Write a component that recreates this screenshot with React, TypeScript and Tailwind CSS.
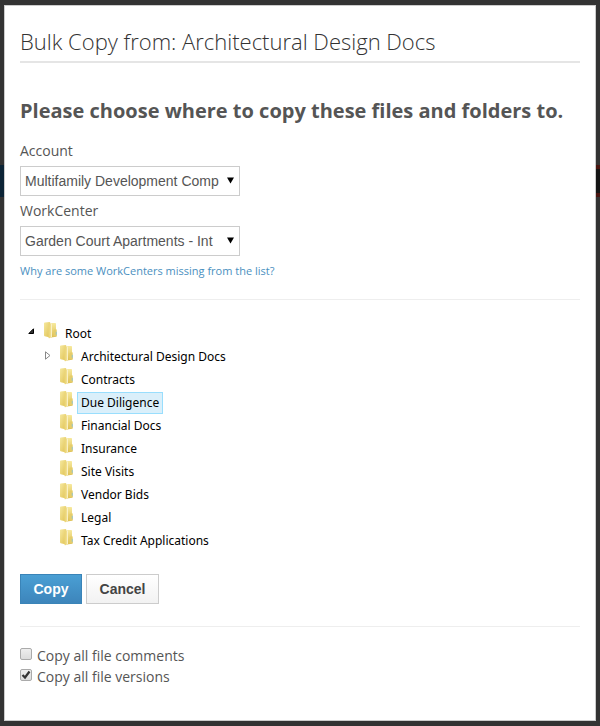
import { useState } from "react";
import type { ReactNode, SelectHTMLAttributes } from "react";

const FOLDERS = [
  "Architectural Design Docs",
  "Contracts",
  "Due Diligence",
  "Financial Docs",
  "Insurance",
  "Site Visits",
  "Vendor Bids",
  "Legal",
  "Tax Credit Applications",
];

function FolderIcon() {
  return (
    <svg viewBox="0 0 16 18" className="h-[18px] w-4 shrink-0" aria-hidden="true">
      <defs>
        <linearGradient id="folderFront" x1="0" y1="0" x2="1" y2="1">
          <stop offset="0" stopColor="#f6e9a0" />
          <stop offset="1" stopColor="#dfc150" />
        </linearGradient>
        <linearGradient id="folderBack" x1="0" y1="0" x2="0" y2="1">
          <stop offset="0" stopColor="#f7ea9f" />
          <stop offset="1" stopColor="#dcbd50" />
        </linearGradient>
      </defs>
      <path d="M8 2.800q0-.8.8-.8h3.400q.8 0 .8.8v5.200l.8.800v6.200q0 .6-.7.7L8 16.500z" fill="url(#folderBack)" />
      <path d="M1 2.300q0-.8.8-.9L6.500 1q.8 0 .8.900V16.500l-5.700-1.300q-.6-.2-.6-.9z" fill="url(#folderFront)" />
      <path d="M5.500 3.500L8 2.200q.8-.3.8.5v13.300l-2.500 1.200q-.8.200-.8-.6z" fill="#ecd67a" />
      <path d="M7.800 2.500l1-.3v13.800l-1 .6z" fill="#fdf8d8" />
      <path d="M10.500 9.500l1-1h1.500v6.500l-2.500.6z" fill="#e6cd69" />
      <path d="M12.800 10.500l.9.400v2.700l-.9.600z" fill="#8fc4d4" />
    </svg>
  );
}

interface TreeLabelProps {
  name: string;
  selected: boolean;
  onSelect: (name: string) => void;
}

function TreeLabel({ name, selected, onSelect }: TreeLabelProps) {
  return (
    <button
      type="button"
      onClick={() => onSelect(name)}
      className={
        selected
          ? "h-[22px] border border-[#99defd] bg-[#daeffa] px-[3px] leading-5"
          : "h-[22px] border border-transparent px-[3px] leading-5"
      }
    >
      {name}
    </button>
  );
}

interface SelectFieldProps extends SelectHTMLAttributes<HTMLSelectElement> {
  label: string;
  children: ReactNode;
}

function SelectField({ id, label, children, ...rest }: SelectFieldProps) {
  return (
    <div>
      <label htmlFor={id} className="block h-[30px] leading-[30px]">
        {label}
      </label>
      <div className="relative w-[220px]">
        <select
          id={id}
          className="block h-[30px] w-full appearance-none overflow-hidden border border-[#ccc] bg-white pr-5 pl-1 font-['Liberation_Sans',sans-serif] text-sm text-[#555]"
          {...rest}
        >
          {children}
        </select>
        <svg
          viewBox="0 0 7 7"
          className="pointer-events-none absolute top-[11px] right-[6px] h-[7px] w-[7px]"
          aria-hidden="true"
        >
          <path d="M0 .5h7L3.500 6.500z" fill="#000" />
        </svg>
      </div>
    </div>
  );
}

interface CheckFieldProps {
  id: string;
  label: string;
  defaultChecked?: boolean;
}

function CheckField({ id, label, defaultChecked }: CheckFieldProps) {
  return (
    <div className="flex h-[21px] items-start gap-[5px]">
      <span className="relative mt-[2px] h-3 w-3">
        <input
          id={id}
          type="checkbox"
          defaultChecked={defaultChecked}
          className="peer block h-3 w-3 appearance-none rounded-[2px] border border-[#aaa] bg-linear-to-b from-[#eee] to-[#dcdcdc]"
        />
        <svg
          viewBox="0 0 12 12"
          className="pointer-events-none absolute inset-0 hidden h-3 w-3 peer-checked:block"
          aria-hidden="true"
        >
          <path d="M2.500 6l2.500 2.500 4.500-6" fill="none" stroke="#333" strokeWidth="2.200" />
        </svg>
      </span>
      <label htmlFor={id} className="leading-5">
        {label}
      </label>
    </div>
  );
}

export default function App() {
  const [selected, setSelected] = useState("Due Diligence");

  return (
    <div className="relative min-h-screen bg-[#333] px-1 pt-[5px] pb-[5px] font-['Open_Sans',sans-serif] text-sm text-[#555]">
      {/* dimmed toolbar of the page behind the dialog */}
      <div className="absolute inset-x-0 top-[165px] flex h-8 justify-between" aria-hidden="true">
        <span className="w-1 bg-[#0c2436]" />
        <span className="w-1 border-y-4 border-[#4a1510] bg-[#151515]" />
      </div>

      <div
        role="dialog"
        aria-labelledby="dialog-title"
        className="relative min-h-[716px] border border-[#ccc] bg-white px-[15px] pb-8"
      >
        <h1
          id="dialog-title"
          className="border-b-2 border-[#e5e5e5] pt-5 pb-[5px] text-[22px] leading-[30px] font-light text-[#333]"
        >
          Bulk Copy from: Architectural Design Docs
        </h1>

        <h2 className="mt-[33px] mb-[10px] text-xl leading-[30px] font-bold">
          Please choose where to copy these files and folders to.
        </h2>

        <SelectField id="account" label="Account">
          <option>Multifamily Development Comp</option>
        </SelectField>
        <SelectField id="workcenter" label="WorkCenter">
          <option>Garden Court Apartments - Int</option>
        </SelectField>

        <a href="#missing" className="mt-[5px] inline-block text-[11px] leading-5 text-[#4a8fc0]">
          Why are some WorkCenters missing from the list?
        </a>

        <hr className="mt-[18px] border-[#eee]" />

        <ul className="mt-[21px] font-['Noto_Sans',sans-serif] text-xs text-black">
          <li>
            <div className="flex h-[23px] pl-2">
              <svg viewBox="0 0 7 7" className="mt-[7px] mr-2 h-[7px] w-[7px]" aria-hidden="true">
                <path d="M5.500.8v4.700h-4.700z" fill="#333" stroke="#000" />
              </svg>
              <FolderIcon />
              <span className="mt-[2px] ml-[2px]">
                <TreeLabel name="Root" selected={selected === "Root"} onSelect={setSelected} />
              </span>
            </div>
            <ul>
              {FOLDERS.map((name, i) => (
                <li key={name} className="flex h-[23px] pl-6">
                  <span className="mt-[7px] mr-2 w-[7px]">
                    {i === 0 && (
                      <svg viewBox="0 0 7 9" className="h-[9px] w-[7px]" aria-hidden="true">
                        <path d="M1.500.8v7.400l4.500-3.700z" fill="#fff" stroke="#888" />
                      </svg>
                    )}
                  </span>
                  <FolderIcon />
                  <span className="mt-[2px] ml-[2px]">
                    <TreeLabel name={name} selected={selected === name} onSelect={setSelected} />
                  </span>
                </li>
              ))}
            </ul>
          </li>
        </ul>

        <div className="mt-[23px] flex gap-1 font-['Liberation_Sans',sans-serif] font-bold">
          <button
            type="button"
            className="h-[30px] w-[62px] border border-[#3a84b8] bg-linear-to-b from-[#4a9fd4] to-[#3d85bb] text-white"
          >
            Copy
          </button>
          <button
            type="button"
            className="h-[30px] w-[73px] border border-[#ccc] bg-linear-to-b from-white to-[#f2f2f2] text-[#444]"
          >
            Cancel
          </button>
        </div>

        <hr className="mt-[22px] mb-[19px] border-[#eee]" />

        <CheckField id="copy-comments" label="Copy all file comments" />
        <CheckField id="copy-versions" label="Copy all file versions" defaultChecked />
      </div>
    </div>
  );
}
